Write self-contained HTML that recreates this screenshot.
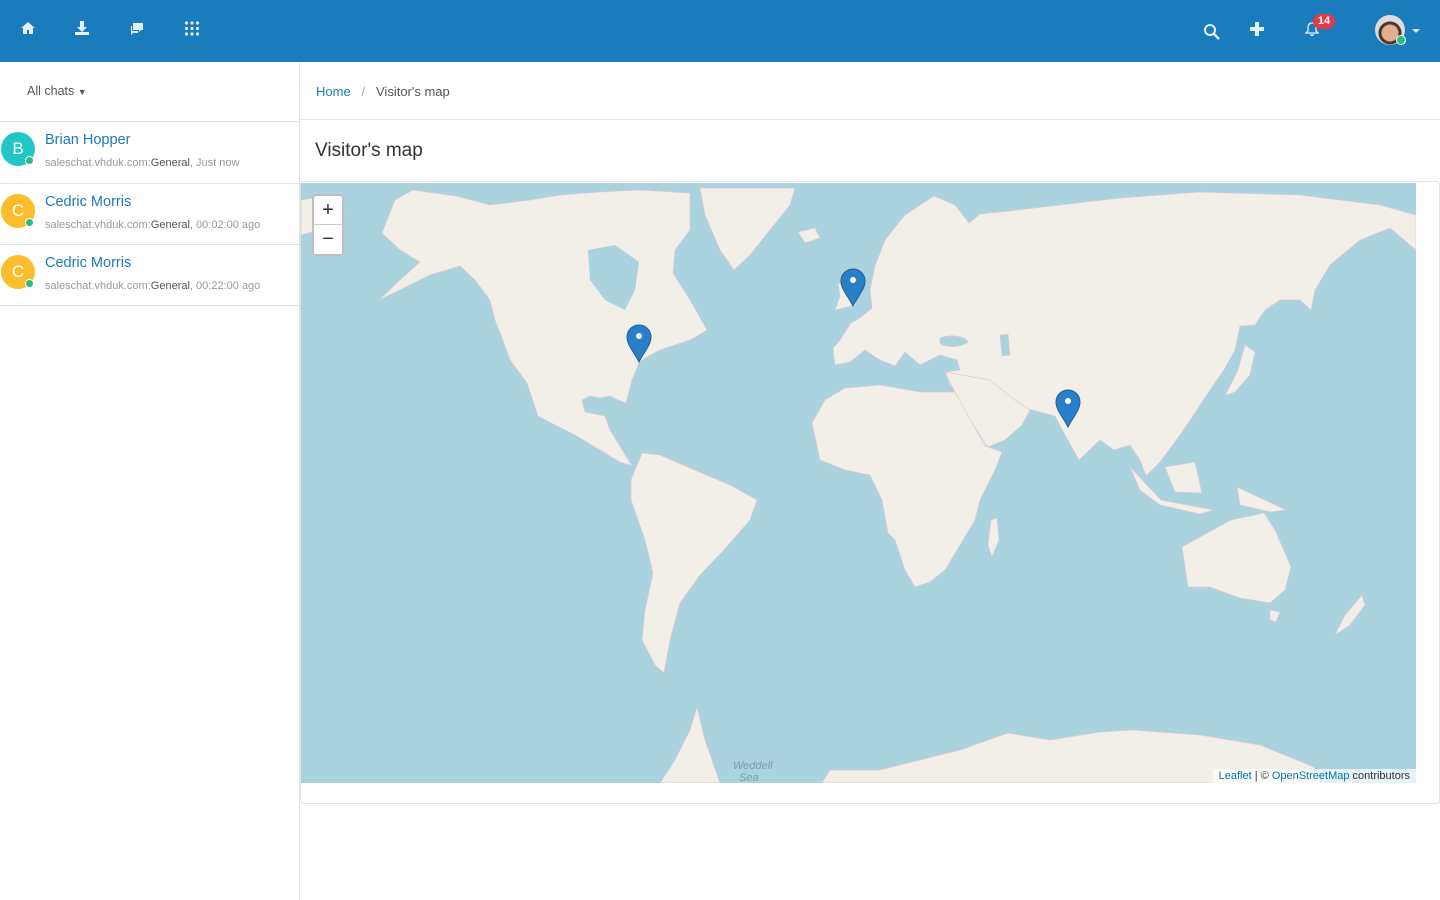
<!DOCTYPE html>
<html><head><meta charset="utf-8"><style>
*{box-sizing:border-box;margin:0;padding:0}
body{width:1440px;height:900px;overflow:hidden;font-family:"Liberation Sans",sans-serif;background:#fff;position:relative;color:#333}
.top{position:absolute;left:0;top:0;width:1440px;height:62px;background:#1a7bbd}
.ic{position:absolute;top:20px}
.side{position:absolute;left:0;top:62px;width:300px;height:838px;border-right:1px solid #e3e3e3}
.allc{position:absolute;left:27px;top:22px;font-size:12.5px;color:#555}
.item{position:absolute;left:0;width:299px;height:62px;border-top:1px solid #e3e3e3}
.av{position:absolute;left:1px;top:10px;width:34px;height:34px;border-radius:50%;color:#fff;font-size:17px;text-align:center;line-height:34px}
.dot{position:absolute;left:25px;top:34px;width:9px;height:9px;border-radius:50%;background:#2dbb7a;border:1.5px solid #fff}
.nm{position:absolute;left:45px;top:10px;font-size:14.5px;color:#1a7bbd}
.sub{position:absolute;left:45px;top:35px;font-size:11px;color:#999}
.sub b{font-weight:normal;color:#555}
.crumb{position:absolute;left:300px;top:62px;width:1140px;height:58px;border-bottom:1px solid #e3e3e3;font-size:13px;padding:22px 16px;color:#555}
.crumb a{color:#1a7bbd}
h1{position:absolute;left:315px;top:140px;font-size:19px;font-weight:normal;color:#333}
.panel{position:absolute;left:300px;top:181px;width:1140px;height:623px;border:1px solid #e3e3e3;border-radius:3px}
.map{position:absolute;left:301px;top:183px;width:1115px;height:600px;background:#aad3df;overflow:hidden}
.zoom{position:absolute;left:11px;top:11px;width:32px;height:62px;background:#fff;border:2px solid rgba(0,0,0,.25);border-radius:4px;font-size:20px;text-align:center}
.attr{position:absolute;right:0;bottom:0;background:rgba(255,255,255,.7);font-size:11px;padding:1px 6px;color:#333}
.attr span{color:#0078a8}
</style></head><body>
<div class="top">
<svg class="ic" style="left:20px" width="16" height="16" viewBox="0 0 16 16"><path d="M8 2L1 8h2v6h4v-4h2v4h4V8h2z" fill="#e6f0f8"/></svg>
<svg class="ic" style="left:74px" width="16" height="16" viewBox="0 0 16 16"><path d="M6 1h4v6h3l-5 5-5-5h3zM1 12h14v3H1z" fill="#e6f0f8"/></svg>
<svg class="ic" style="left:129px" width="16" height="16" viewBox="0 0 16 16"><path d="M4 3h10v7h-2l-2 2v-2H4zM2 6h1v5h6v2H4l-2 2z" fill="#e6f0f8"/></svg>
<svg class="ic" style="left:184px" width="16" height="16" viewBox="0 0 16 16" fill="#e6f0f8"><circle cx="2.5" cy="3" r="1.6"/><circle cx="8" cy="3" r="1.6"/><circle cx="13.5" cy="3" r="1.6"/><circle cx="2.5" cy="8.5" r="1.6"/><circle cx="8" cy="8.5" r="1.6"/><circle cx="13.5" cy="8.5" r="1.6"/><circle cx="2.5" cy="14" r="1.6"/><circle cx="8" cy="14" r="1.6"/><circle cx="13.5" cy="14" r="1.6"/></svg>
<svg class="ic" style="left:1203px;top:23px" width="18" height="18" viewBox="0 0 18 18"><circle cx="7" cy="7" r="5" fill="none" stroke="#e6f0f8" stroke-width="2"/><path d="M11 11l5 5" stroke="#e6f0f8" stroke-width="2.4"/></svg>
<svg class="ic" style="left:1250px;top:22px" width="14" height="14" viewBox="0 0 14 14"><path d="M5 0h4v5h5v4H9v5H5V9H0V5h5z" fill="#e6f0f8"/></svg>
<svg class="ic" style="left:1304px;top:21px" width="16" height="16" viewBox="0 0 16 16"><path d="M8 2c-3 0-4 2-4 5v3l-2 2h12l-2-2V7c0-3-1-5-4-5zM6.5 13a1.5 1.5 0 003 0" fill="none" stroke="#e6f0f8" stroke-width="1.3"/></svg>
<div style="position:absolute;left:1313px;top:14px;width:22px;height:15px;border-radius:8px;background:#e53945;color:#fff;font-size:11px;font-weight:bold;text-align:center;line-height:15px">14</div>
<div style="position:absolute;left:1375px;top:15px;width:30px;height:30px;border-radius:50%;background:radial-gradient(circle at 50% 60%,#e0b090 0 8px,#4a3526 9px 11px,#ddd 12px)"></div>
<div style="position:absolute;left:1396px;top:35px;width:10px;height:10px;border-radius:50%;background:#2dbb7a;border:1.5px solid #fff"></div>
<div style="position:absolute;left:1412px;top:29px;border:4px solid transparent;border-top:4px solid #cfe3f2"></div>
</div>
<div class="side">
<div class="allc">All chats <span style="font-size:9px">▼</span></div>
<div class="item" style="top:59px"><div class="av" style="background:#22c6c6">B</div><div class="dot"></div><div class="nm">Brian Hopper</div><div class="sub">saleschat.vhduk.com:<b>General</b>, Just now</div></div>
<div class="item" style="top:121px"><div class="av" style="background:#fbbd2b">C</div><div class="dot"></div><div class="nm">Cedric Morris</div><div class="sub">saleschat.vhduk.com:<b>General</b>, 00:02:00 ago</div></div>
<div class="item" style="top:182px;border-bottom:1px solid #e3e3e3"><div class="av" style="background:#fbbd2b">C</div><div class="dot"></div><div class="nm">Cedric Morris</div><div class="sub">saleschat.vhduk.com:<b>General</b>, 00:22:00 ago</div></div>
</div>
<div class="crumb"><a>Home</a> &nbsp; <span style="color:#aaa">/</span> &nbsp; Visitor's map</div>
<h1>Visitor's map</h1>
<div class="panel"></div>
<div class="map">
<svg width="1115" height="600" viewBox="301 183 1115 600" style="position:absolute;left:0;top:0">
<g fill="#f2efe9" stroke="#dcc9d4" stroke-width="0.7">
<path d="M301 200L330 195 345 215 320 230 301 235z"/>
<path d="M382 233L395 200 413 190 456 196 490 205 530 200 560 195 600 192 640 190 690 193 690 230 675 250 673 273 690 300 707 330 690 340 660 350 645 358 639 363 632 380 626 403 618 400 610 396 600 398 590 396 582 400 585 412 605 416 610 430 632 466 620 462 600 450 575 435 555 425 538 416 527 383 510 360 504 343 495 320 490 300 475 280 460 266 430 275 400 290 379 300 400 280 420 262 400 250z"/>
<path d="M588 250L615 245 639 262 635 290 625 310 605 300 590 280z" fill="#aad3df" stroke="none"/>
<path d="M700 188L795 188 790 205 770 230 750 255 734 270 720 250 705 215z"/>
<path d="M798 232L815 228 820 238 805 243z"/>
<path d="M875 266L885 240 905 215 934 196 955 205 969 223 980 214 1000 212 1060 205 1120 198 1200 192 1300 195 1380 205 1416 215 1416 250 1390 228 1360 240 1330 265 1315 290 1311 310 1300 300 1280 300 1265 310 1255 325 1240 326 1235 350 1224 370 1210 390 1193 416 1180 435 1169 450 1160 462 1146 476 1140 460 1130 445 1114 450 1100 440 1079 460 1065 435 1055 416 1040 412 1025 408 1012 410 1020 416 1005 440 985 446 970 420 957 393 950 385 945 372 960 370 957 360 940 355 920 365 905 352 895 366 880 360 865 350 850 362 835 365 833 348 840 340 851 323 860 318 872 308 870 290z"/>
<path d="M945 372L990 380 1012 398 1030 410 1022 425 1005 440 988 447 970 420 955 392z"/>
<path d="M940 338C950 334 965 336 968 342 960 348 945 348 940 343z" fill="#aad3df"/>
<path d="M1000 335L1008 334 1010 355 1002 356z" fill="#aad3df"/>
<path d="M838 283L850 286 856 305 835 310 840 296z"/>
<path d="M812 423L825 400 845 388 880 385 920 392 955 392 965 410 985 446 1002 452 995 470 980 500 975 520 960 545 945 570 930 582 915 587 905 570 895 540 888 533 882 500 870 475 845 470 820 460z"/>
<path d="M991 520L997 518 999 540 992 557 988 545z"/>
<path d="M642 453L660 455 690 468 730 485 757 500 750 520 724 550 700 575 680 603 670 640 664 673 655 665 642 640 645 610 653 573 645 540 631 500 631 480z"/>
<path d="M1130 467L1161 500 1214 510 1200 514 1160 505 1140 490z"/>
<path d="M1165 467L1195 462 1202 493 1175 492z"/>
<path d="M1237 487L1286 510 1270 512 1240 505z"/>
<path d="M1245 345L1255 352 1250 375 1235 392 1225 396 1238 370z"/>
<path d="M1182 547L1231 520 1264 513 1275 530 1291 567 1285 590 1270 603 1240 598 1210 587 1188 587z"/>
<path d="M1270 610L1280 612 1276 622 1270 620z"/>
<path d="M1362 595L1365 605 1350 625 1335 635 1345 615z"/>
<path d="M697 707L690 730 675 760 660 783 720 783 705 740z"/>
<path d="M822 783L830 770 880 770 920 760 960 750 1008 733 1050 740 1100 732 1133 730 1200 735 1260 745 1314 767 1320 783z"/>
</g>
<g fill="#2a7fc9" stroke="#1d5f9a" stroke-width="1">
<path d="M853 306c-5-10-12-17-12-25a12 12 0 0124 0c0 8-7 15-12 25z"/>
<path d="M639 362c-5-10-12-17-12-25a12 12 0 0124 0c0 8-7 15-12 25z"/>
<path d="M1068 427c-5-10-12-17-12-25a12 12 0 0124 0c0 8-7 15-12 25z"/>
</g>
<g fill="#fff"><circle cx="853" cy="280" r="3"/><circle cx="639" cy="336" r="3"/><circle cx="1068" cy="401" r="3"/></g>
</svg>
<div class="zoom"><div style="height:29px;line-height:29px;border-bottom:1px solid #ccc">+</div><div style="line-height:29px">−</div></div>
<div style="position:absolute;left:432px;top:577px;font-size:11px;font-style:italic;color:#7a9db0">Weddell<br>&nbsp;&nbsp;Sea</div>
<div class="attr"><span>Leaflet</span> | © <span>OpenStreetMap</span> contributors</div>
</div>
</body></html>
